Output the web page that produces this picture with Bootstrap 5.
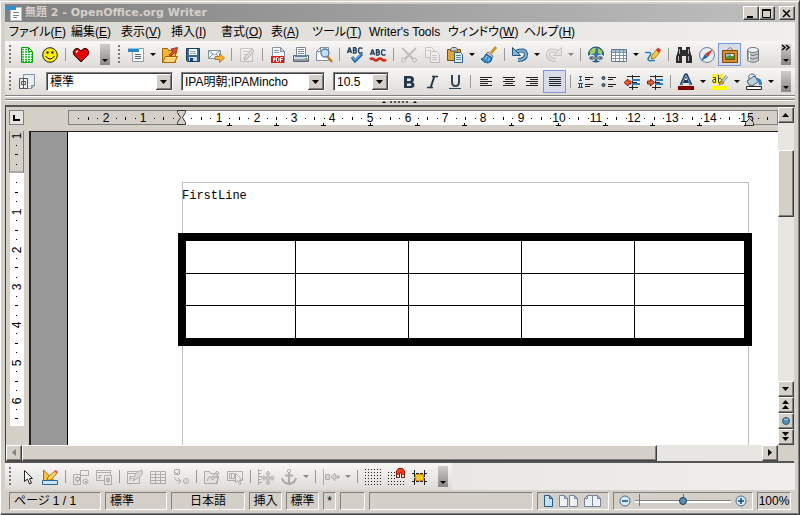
<!DOCTYPE html>
<html lang="ja">
<head>
<meta charset="utf-8">
<meta name="viewport" content="width=device-width, initial-scale=1">
<title>無題 2 - OpenOffice.org Writer</title>
<link href="https://cdn.jsdelivr.net/npm/bootstrap@5.3.0/dist/css/bootstrap.min.css" rel="stylesheet">
<style>
:root{--face:#d4d0c8;--dark:#808080}
body{font:12px/16px "Liberation Sans","Noto Sans CJK JP",sans-serif;color:#000;background:var(--face)}
button{padding:0;border:0;background:none;color:inherit;font:inherit;line-height:1}
svg{display:block;flex:none}
.win{height:100vh;padding:3px 4px 4px;border:1px solid #fff;border-top-color:var(--face);border-right-color:#404040;border-bottom-color:#404040;box-shadow:inset 0 1px #fff,inset -1px -1px var(--dark)}
.titlebar{height:18px;padding-left:1px;background:linear-gradient(90deg,#808080,#c0c0c0);color:var(--face)}
.titlebar h1{font:bold 11px/18px "DejaVu Sans","Noto Sans CJK JP",sans-serif;margin:0 0 0 2px}
.bevel{background:var(--face);border:1px solid;border-color:#fff #404040 #404040 #fff;box-shadow:inset -1px -1px var(--dark);display:flex;align-items:center;justify-content:center;flex:none}
.capbtn{width:16px;height:14px}
.menubar{height:19px;padding-left:4px;background:linear-gradient(90deg,#dbd8d2,#f1efed)}
.menubar a{color:#000;text-decoration:none;white-space:nowrap;flex:none;font-feature-settings:"palt"}
.menubar u{text-underline-offset:1px}
.m1{width:62px}.m2{width:50px}.m3{width:41px}.m4{width:57px}.m5{width:79px}.m6{width:76px}
.tbar{height:27px;background:linear-gradient(#f8f7f6,#dedbd7);flex:none}
.tail{background:linear-gradient(90deg,#e1ded9,#f0eeec)}
.grip{width:10px;height:20px;flex:none;background:repeating-linear-gradient(#777 0 2px,transparent 2px 4px) 4px 0/2px 100% no-repeat}
.ic{width:23px;height:23px;flex:none;display:flex;align-items:center;justify-content:center}
.ic.on{background:#d8dcea;border:1px solid #7c96dc}
.ic:disabled{opacity:.4;filter:grayscale(1)}
.car{width:11px;height:23px;flex:none;display:flex;align-items:center;justify-content:center}
.car::after,.more::after{content:"";border:3px solid transparent;border-top-color:#000;border-bottom:0}
.car:disabled::after{border-top-color:#888}
.vr2{width:1px;height:13px;background:#999;margin:0 3px 0 4px;flex:none}
.more{width:10px;height:21px;flex:none;background:linear-gradient(#d0cdc7,#888);display:flex;flex-direction:column;align-items:center;justify-content:flex-end;padding-bottom:3px}
.combo{height:19px;appearance:none;border:1px solid;border-color:var(--dark) #fff #fff var(--dark);box-shadow:inset 1px 1px #404040;padding:0 18px 0 3px;font:12px/16px "Liberation Sans","Noto Sans CJK JP",sans-serif;font-feature-settings:"palt";color:#000;border-radius:0;background:#fff url("data:image/svg+xml,%3Csvg xmlns='http://www.w3.org/2000/svg' width='16' height='16'%3E%3Cpath fill='%23404040' d='M0 0h16v16H0z'/%3E%3Cpath fill='%23fff' d='M0 0h15v15H0z'/%3E%3Cpath fill='%23808080' d='M1 1h14v14H1z'/%3E%3Cpath fill='%23d4d0c8' d='M1 1h13v13H1z'/%3E%3Cpath d='M4 6h7L7.500 10z'/%3E%3C/svg%3E") right 0 top 1px no-repeat}
.c1{width:127px}.c2{width:144px}.c3{width:56px}
.split{height:12px;flex:none;border-top:1px solid var(--dark);border-bottom:2px solid #555;background:linear-gradient(#fff 0 1px,#d4d0c8 1px 3px,#808080 3px 4px,#fff 4px 5px,#d4d0c8 5px)}
.editor{display:grid;grid-template:24px minmax(0,1fr) 16px / 23px minmax(0,1fr) 16px;border-left:1px solid #404040;border-bottom:2px solid #555;margin-right:1px;min-height:0}
.tabsel{width:15px;height:15px;margin:3px 0 0 3px;background:#e8e6e1;border:1px solid var(--dark);display:flex;align-items:center;justify-content:center}
.hrule{grid-column:2}.vrule{grid-column:1;overflow:hidden}
.desk{background:#999;border:solid #222;border-width:1px 0 0 2px;padding-left:36px;overflow:hidden}
.sheet{height:100%;background:#fff;border-left:1px solid #000;padding:50px 29px 0 114px}
.area{height:100%;border:1px solid #c0c0c0;border-bottom:0;font:12px/16px "Liberation Mono","Noto Sans CJK JP",monospace}
.area p{margin:0 -1px;padding:5px 0 29px}
.grid5{width:calc(100% + 9px);margin-left:-5px;border-collapse:collapse;table-layout:fixed;border:8px solid #000;background:#fff}
.grid5 td{height:32px;border:1px solid #000;padding:0}
.grid5 tr:first-child td{height:36px}.grid5 tr:last-child td{height:37px}
.vs{grid-column:3;grid-row:1/3}.hs{grid-column:1/3}
.trk{background:#e7e6e2}
.sb{width:16px;height:16px}
.status{height:20px;padding:2px 4px 0 4px;gap:4px}
.cell{height:18px;border:1px solid;border-color:var(--dark) #fff #fff var(--dark);display:flex;align-items:center;flex:none;white-space:nowrap;overflow:hidden}
.s1{width:92px;padding-left:4px}.s2{width:62px;padding-left:4px}.s3{width:74px}.s4{width:33px}.s5{width:13px}.s6{width:25px}.s7{width:72px;gap:5px;padding-left:6px}.s8{width:140px;padding:0 5px}.s9{width:34px}
.cell span{font-feature-settings:"palt"}
.zoom{appearance:none;width:98px;height:14px;flex:1;min-width:0;margin:0 4px;background:linear-gradient(#777 0 0) 4px 0/1px 12px no-repeat,linear-gradient(#777 0 0) 50% 0/1px 5px no-repeat,linear-gradient(#808080 0 1px,#fff 1px) 0 6px/100% 3px no-repeat}
.zoom::-webkit-slider-thumb{appearance:none;width:8px;height:8px;border-radius:50%;background:#5a8fb5;border:1px solid #173b57}
</style>
</head>
<body>
<div class="win d-flex flex-column">
<header class="titlebar d-flex align-items-center flex-shrink-0">
<svg width="17" height="17" viewBox="0 0 17 17"><path fill="#fff" stroke="#b6c0ca" d="M4.500 2.500h11v13h-11z"/><path fill="#2f8fd0" d="M0 1h10v4H0z"/><path stroke="#788" d="M7 7.500h6M7 10.500h6M7 12.500h4"/></svg>
<h1>無題 2 - OpenOffice.org Writer</h1>
<div class="d-flex ms-auto">
<button class="bevel capbtn" aria-label="最小化"><svg width="10" height="9"><path d="M1 7h6v2H1z"/></svg></button>
<button class="bevel capbtn" aria-label="最大化"><svg width="10" height="9"><path fill="none" stroke="#000" d="M.5 1v7.500h8V1M0 .5h9M0 1.500h9"/></svg></button>
<button class="bevel capbtn ms-1" aria-label="閉じる"><svg width="10" height="9"><path stroke="#000" stroke-width="1.500" d="M1 1l7 7M8 1L1 8"/></svg></button>
</div>
</header>
<nav class="menubar d-flex align-items-center flex-shrink-0" aria-label="メニュー">
<a class="m1" href="#">ファイル(<u>F</u>)</a><a class="m2" href="#">編集(<u>E</u>)</a><a class="m2" href="#">表示(<u>V</u>)</a><a class="m2" href="#">挿入(<u>I</u>)</a><a class="m2" href="#">書式(<u>O</u>)</a><a class="m3" href="#">表(<u>A</u>)</a><a class="m4" href="#">ツール(<u>T</u>)</a><a class="m5" href="#">Writer's Tools</a><a class="m6" href="#">ウィンドウ(<u>W</u>)</a><a href="#">ヘルプ(<u>H</u>)</a>
</nav>

<div class="tbar d-flex align-items-center">
<span class="grip"></span>
<button class="ic" aria-label="表計算"><svg width="18" height="18"><path fill="#fff" stroke="#0a0" d="M3.500 1.500h7l4 4v11h-11z"/><path stroke="#0c1" stroke-width="1.600" stroke-dasharray="2 1" d="M4 3.500h6M4 6h9M4 8.500h10M4 11h10M4 13.500h10M4 15.500h10"/><path fill="#fff" stroke="#0a0" d="M10.500 1.500v4h4z"/></svg></button>
<button class="ic" aria-label="スマイル"><svg width="18" height="18"><circle cx="9" cy="9" r="7.300" fill="#fff000" stroke="#222"/><path d="M5.500 5.500h2v2h-2zM10.500 5.500h2v2h-2z"/><path fill="none" stroke="#000" d="M4.500 10q4.500 6 9 0"/></svg></button>
<i class="vr2"></i>
<button class="ic" aria-label="ハート"><svg width="18" height="18"><path fill="#e80000" stroke="#200" d="M9 16L2 9Q0 5 3 3q3-2 6 2q3-4 6-2q3 2 1 6z"/><path stroke="#fff" stroke-width="1.500" d="M4 6.500l2-2"/></svg></button>
<button class="more ms-2" aria-label="その他"></button>
<span class="grip ms-1"></span>
<button class="ic" aria-label="新規"><svg width="18" height="18"><path fill="#fff" stroke="#8a9bab" d="M5.500 2.500h11v13h-11z"/><path fill="#2787c8" d="M1 2h11v4H1z"/><path fill="#8cc5ea" d="M1 2h11v1H1z"/><path stroke="#567" d="M8 8.500h6M8 10.500h6M8 12.500h6"/></svg></button><button class="car" aria-label="新規の種類"></button>
<button class="ic" aria-label="開く"><svg width="18" height="18"><path fill="#f6b335" stroke="#a86400" d="M1.500 16.500v-14h5l1 2h7v12z"/><path fill="#ffd675" stroke="#a86400" d="M1.500 16.500l3-6h12l-3 6z"/><path fill="#e0502c" stroke="#8a2410" stroke-width=".8" d="M8 9l4-4-2-2 6.500-1.500L15 8l-1.500-1.500-4 4z"/></svg></button>
<button class="ic" aria-label="保存"><svg width="18" height="18"><path fill="#376b96" stroke="#173f63" d="M2.500 2.500h13v13h-12l-1-1z"/><path fill="#fff" d="M5 3h8v6H5z"/><path fill="#cbd8e2" d="M5 11h8v4H5z"/><path fill="#173f63" d="M6 12h3v3H6z"/><path stroke="#9ab" d="M6 5.500h6M6 7.500h6"/></svg></button>
<button class="ic" aria-label="メールで送信"><svg width="18" height="18"><path fill="#fff" stroke="#7b93a8" d="M1.500 4.500h12v8h-12z"/><path fill="none" stroke="#7b93a8" d="M2 5l5.500 4L13 5M2 12l4-4M13 12L9 8"/><path fill="#f9b233" stroke="#a86400" stroke-width=".8" d="M8 10.500h4.500v-3l5 4.500-5 4.500v-3H8z"/></svg></button>
<i class="vr2"></i>
<button class="ic" disabled aria-label="編集モード"><svg width="18" height="18"><path fill="#eee" stroke="#888" d="M2.500 2.500h12v13h-12z"/><path stroke="#999" d="M5 5.500h7M5 8.500h4M5 11.500h3"/><path fill="#ccc" stroke="#666" d="M6 14l1-3 7-8 2 2-7 8z"/></svg></button>
<i class="vr2"></i>
<button class="ic" aria-label="PDF"><svg width="18" height="18"><path fill="#f4f7fa" stroke="#8193a4" d="M3.500 1.500h8l4 4v11h-12z"/><path fill="#cdd8e1" stroke="#8193a4" d="M11.500 1.500v4h4z"/><path stroke="#89a" d="M5 4.500h5M5 6.500h5"/><path fill="#d81e13" d="M2 10h13v7H2z"/><path stroke="#fff" stroke-width="1" fill="none" d="M4.500 16v-4h1.500v2h-1.500M7.500 11.500h1.500l1 1v2l-1 1h-1.500zM11.500 16v-4.500h2.500M11.500 13.500h2"/></svg></button>
<button class="ic" aria-label="印刷"><svg width="18" height="18"><path fill="#fff" stroke="#7c8791" d="M4.500 9V1.500h9V9"/><path stroke="#789" d="M6 3.500h6M6 5.500h6M6 7.500h6"/><path fill="#d3dae0" stroke="#5b6670" d="M1.500 9.500h15v6h-15z"/><path fill="#5d87a8" d="M3 9h12v2H3z"/><path fill="#8d99a4" d="M2 13h14v2H2z"/><path fill="#6b3" d="M13 12h2v1h-2z"/></svg></button>
<button class="ic" aria-label="印刷プレビュー"><svg width="18" height="18"><path fill="#fff" stroke="#8193a4" d="M1.500 5.500l4-4h8v13h-12z"/><path fill="none" stroke="#8193a4" d="M1.500 5.500h4v-4"/><path stroke="#c07d22" stroke-width="2.500" d="M12 10l5 6"/><circle cx="10" cy="7" r="4" fill="#bfe0f8" stroke="#577a9a" stroke-width="1.300"/></svg></button>
<i class="vr2"></i>
<button class="ic" aria-label="スペルチェック"><svg width="18" height="18"><path fill="none" stroke="#23435f" stroke-width="1.400" d="M1.500 7l1.700-5h.6l1.700 5M2 5.500h3M7.500 1.700V7h2q2-1.500 0-2.700h-2h2q1.500-1.300 0-2.600zM16.500 2.500q-4-2-4 2t4 2"/><path fill="none" stroke="#1d65a8" stroke-width="3" d="M6 11l3 4 7-7"/><path fill="none" stroke="#8cc8f5" d="M6.500 11l2.500 3.300 6-6"/></svg></button>
<button class="ic" aria-label="自動スペルチェック"><svg width="18" height="18"><path fill="none" stroke="#23435f" stroke-width="1.400" d="M1.500 9l1.700-5h.6l1.700 5M2 7.500h3M7.500 3.700V9h2q2-1.500 0-2.700h-2h2q1.500-1.300 0-2.600zM16.500 4.500q-4-2-4 2t4 2"/><path fill="none" stroke="#d92b1c" stroke-width="2.500" d="M1 13.500q2-2 4 0t4 0t4 0t4 0"/></svg></button>
<i class="vr2"></i>
<button class="ic" disabled aria-label="切り取り"><svg width="18" height="18"><path fill="none" stroke="#777" stroke-width="1.800" d="M2 2l11 11M16 2L5 13"/><circle cx="3.500" cy="14" r="2" fill="none" stroke="#777"/><circle cx="14.500" cy="14" r="2" fill="none" stroke="#777"/></svg></button>
<button class="ic" disabled aria-label="コピー"><svg width="18" height="18"><path fill="#f4f4f4" stroke="#888" d="M2.500 1.500h6l2 2v8h-8z"/><path fill="#f4f4f4" stroke="#888" d="M7.500 5.500h6l3 3v8h-9z"/><path stroke="#999" d="M4 4.500h4M9 9.500h5M9 11.500h5M9 13.500h5"/></svg></button>
<button class="ic" aria-label="貼り付け"><svg width="18" height="18"><path fill="#e4a62f" stroke="#7b5200" d="M1.500 3.500h13v11h-13z"/><path fill="#ccd2d6" stroke="#555" d="M4.500 5v-2l2-1.500h3l2 1.500v2z"/><path fill="#eaf3fb" stroke="#2a5f8e" d="M8.500 6.500h6l2 2v8h-8z"/><path stroke="#4b86b5" d="M10 9.500h5M10 11.500h5M10 13.500h5"/></svg></button><button class="car" aria-label="貼り付け形式"></button>
<button class="ic" aria-label="書式の貼り付け"><svg width="18" height="18"><path stroke="#d2942a" stroke-width="3" d="M11 7l5-6"/><path fill="#ccd2d6" stroke="#667" d="M8 6l5 4-1 2-6-4z"/><path fill="#3a8ed3" stroke="#14528b" d="M6 8l6 4q0 4-4 5-4 0-7-4 3 0 5-5z"/><path stroke="#a8d7ff" d="M5 13l2-3M8 15l1.500-3"/></svg></button>
<i class="vr2"></i>
<button class="ic" aria-label="元に戻す"><svg width="18" height="18"><path fill="none" stroke="#24587f" stroke-width="4" d="M4 6q10-4 11 2 0 6-8 6"/><path fill="none" stroke="#80b6da" stroke-width="2" d="M4 6q10-4 11 2 0 6-8 6"/><path fill="#80b6da" stroke="#24587f" d="M1.500 1.500v8h8z"/></svg></button><button class="car" aria-label="元に戻す履歴"></button>
<button class="ic" disabled aria-label="やり直し"><svg width="18" height="18"><path fill="none" stroke="#888" stroke-width="4" d="M14 6Q4 2 3 8q0 6 8 6"/><path fill="none" stroke="#ddd" stroke-width="2" d="M14 6Q4 2 3 8q0 6 8 6"/><path fill="#ddd" stroke="#888" d="M16.500 1.500v8h-8z"/></svg></button><button class="car" disabled aria-label="やり直し履歴"></button>
<i class="vr2"></i>
<button class="ic" aria-label="ハイパーリンク"><svg width="18" height="18"><circle cx="9" cy="8.500" r="7.500" fill="#2e74b3" stroke="#194872"/><path fill="#a5cf5b" d="M3 5q3-4 6-3l-1 5-5 2zM11 2l4 3v4l-4-2z"/><rect x="1.500" y="9.500" width="6" height="5" rx="2.500" fill="#5a6d7d" stroke="#dfe8ee" stroke-width="1.500"/><rect x="10.500" y="9.500" width="6" height="5" rx="2.500" fill="#5a6d7d" stroke="#dfe8ee" stroke-width="1.500"/><path stroke="#234" stroke-width="2.500" d="M5 12h8"/><path stroke="#dfe8ee" d="M5 12h8"/></svg></button>
<button class="ic" aria-label="表"><svg width="18" height="18"><path fill="#fff" stroke="#607990" d="M1.500 3.500h15v12h-15z"/><path fill="#a9c1d6" d="M2 4h14v2H2z"/><path stroke="#7d94a9" d="M2 6.500h14M2 9.500h14M2 12.500h14M5.500 4v11M9.500 4v11M13.500 4v11"/></svg></button><button class="car" aria-label="表の大きさ"></button>
<button class="ic" aria-label="図形描画"><svg width="18" height="18"><path fill="none" stroke="#2b80c4" stroke-width="1.500" d="M1 6.500h4q3 0 1 3l-2 3q0 3 4 2h3"/><path fill="#ffc83d" stroke="#9a6b00" stroke-width=".8" d="M7 13l1-4 5-6 3 3-5 6z"/><path fill="#d33" d="M12 4l2-2.500 3 2.500L15 7z"/></svg></button>
<i class="vr2"></i>
<button class="ic" aria-label="検索と置換"><svg width="18" height="18"><path fill="#2d2d2d" d="M3 1h4v3h4V1h4v4l2 6v6h-6v-7H7v7H1v-6l2-6z"/><path stroke="#aaa" d="M4.500 3v5M3.500 10v5M13.500 3v5M13.500 10v5"/></svg></button>
<button class="ic" aria-label="ナビゲーター"><svg width="18" height="18"><circle cx="9" cy="9" r="7.500" fill="#e4edf4" stroke="#6d8294"/><path fill="#1e66b2" d="M3 15l4-7 3 3z"/><path fill="#e0331f" d="M15 3L7 8l3 3z"/></svg></button>
<button class="ic on" aria-label="ギャラリー"><svg width="18" height="18"><path fill="none" stroke="#9b7028" d="M5 5l4-3.500L13 5"/><path fill="#d69131" stroke="#7d4800" d="M1.500 4.500h15v12h-15z"/><path fill="#8fc8ee" stroke="#7d4800" d="M4.500 7.500h9v6h-9z"/><path fill="#4d9434" d="M5 13v-2q4-3 8-1v3z"/><path fill="#fff36b" d="M10 8h2v2h-2z"/></svg></button>
<button class="ic" aria-label="データソース"><svg width="18" height="18"><path fill="#c9ced2" stroke="#6d757c" d="M3.500 4v10.500q5.500 3.500 11 0V4"/><ellipse cx="9" cy="4" rx="5.500" ry="2.500" fill="#f2f4f5" stroke="#6d757c"/><path fill="none" stroke="#6d757c" d="M3.500 8q5.500 3 11 0M3.500 11.500q5.500 3 11 0"/><path stroke="#fff" d="M5.500 7v8"/></svg></button>
<button class="more ms-auto me-1" aria-label="その他"><svg class="mb-auto" width="10" height="8"><path fill="none" stroke="#000" stroke-width="1.300" d="M1 1l3 2.500L1 6M5 1l3 2.500L5 6"/></svg></button>
</div>

<div class="tbar d-flex align-items-center">
<span class="grip"></span>
<button class="ic" aria-label="スタイルと書式設定"><svg width="18" height="18"><path fill="#e6eef4" stroke="#8293a2" d="M5.500 1.500h11v11l-3 3h-8z"/><path fill="#b9cddc" stroke="#8293a2" d="M16.500 12.500h-3v3z"/><path fill="#eee" stroke="#555" d="M1.500 5.500h8v10h-8z"/><path fill="#fff" stroke="#555" d="M3.500 8.500h4v3h-4zM5.500 6v9"/></svg></button>
<select class="combo c1 ms-2 flex-shrink-0" aria-label="段落スタイル"><option>標準</option></select>
<select class="combo c2 ms-2 flex-shrink-0" aria-label="フォント名"><option>IPA明朝;IPAMincho</option></select>
<select class="combo c3 ms-2 me-2 flex-shrink-0" aria-label="フォントサイズ"><option>10.5</option></select>
<button class="ic" aria-label="太字"><svg width="18" height="18"><path fill="#26384a" fill-rule="evenodd" d="M4 3h6q4 0 4 3.500 0 2-1.500 2.500Q14.500 10 14.500 12q0 3-4 3H4zM7 5.500v2.500h2.500q1.500 0 1.500-1.200T9.500 5.500zM7 10.500v2.500h2.500q2 0 2-1.300t-2-1.200z"/></svg></button>
<button class="ic" aria-label="斜体"><svg width="18" height="18"><path stroke="#26384a" stroke-width="2" d="M11.500 3l-4 12"/><path stroke="#26384a" stroke-width="1.300" d="M9 3.500h6M4 14.500h6"/></svg></button>
<button class="ic" aria-label="下線"><svg width="18" height="18"><path fill="none" stroke="#34465a" stroke-width="2" d="M6 2v7q0 4 3.500 4T13 9V2"/><path stroke="#34465a" d="M3 15.500h12"/></svg></button>
<i class="vr2"></i>
<button class="ic" aria-label="左揃え"><svg width="18" height="18"><path stroke="#222" d="M3 4.500h12M3 6.500h8M3 8.500h12M3 10.500h8M3 12.500h12"/></svg></button>
<button class="ic" aria-label="中央揃え"><svg width="18" height="18"><path stroke="#222" d="M3 4.500h12M5 6.500h8M3 8.500h12M5 10.500h8M3 12.500h12"/></svg></button>
<button class="ic" aria-label="右揃え"><svg width="18" height="18"><path stroke="#222" d="M3 4.500h12M7 6.500h8M3 8.500h12M7 10.500h8M3 12.500h12"/></svg></button>
<button class="ic on" aria-label="両端揃え"><svg width="18" height="18"><path stroke="#222" d="M3 4.500h12M3 6.500h12M3 8.500h12M3 10.500h12M3 12.500h12"/></svg></button>
<i class="vr2"></i>
<button class="ic" aria-label="番号付け"><svg width="18" height="18"><path stroke="#2c536f" d="M2 3.500h3M2 7.500h3M3.500 3v5M1 10.500h5M1 14.500h5M2.500 10v5M4.500 10v5"/><path stroke="#222" d="M8 4.500h8M8 6.500h5M8 11.500h8M8 13.500h5"/></svg></button>
<button class="ic" aria-label="箇条書き"><svg width="18" height="18"><circle cx="3.500" cy="5" r="1.500" fill="#4b86b5" stroke="#234"/><circle cx="3.500" cy="12" r="1.500" fill="#4b86b5" stroke="#234"/><path stroke="#222" d="M8 4.500h8M8 6.500h5M8 11.500h8M8 13.500h5"/></svg></button>
<button class="ic" aria-label="インデントを減らす"><svg width="18" height="18"><path stroke="#222" d="M4 3.500h13M6 14.500h9M9.500 2v15"/><path stroke="#2580bd" stroke-width="2" d="M9 7h8M9 11h8"/><path stroke="#222" d="M9 9.500h5"/><path fill="#ee6430" stroke="#8c2108" d="M1 9.500l4-3.500V8h3v3H5v2z"/></svg></button>
<button class="ic" aria-label="インデントを増やす"><svg width="18" height="18"><path stroke="#222" d="M4 3.500h13M6 14.500h9M9.500 2v15"/><path stroke="#2580bd" stroke-width="2" d="M9 7h8M9 11h8"/><path stroke="#222" d="M9 9.500h5"/><path fill="#ee6430" stroke="#8c2108" d="M8.500 9.500l-4-3.500V8h-3v3h3v2z"/></svg></button>
<i class="vr2"></i>
<button class="ic" aria-label="フォントの色"><svg width="18" height="18"><path fill="none" stroke="#1c3d5c" stroke-width="2.800" d="M4 12l4.500-10h1L14 12M6 8.500h6"/><path fill="none" stroke="#7eaed1" d="M4.500 12L9 2l4.500 10"/><path fill="#800000" d="M1 13h16v4H1z"/></svg></button><button class="car" aria-label="フォントの色の選択"></button>
<button class="ic" aria-label="蛍光ペン"><svg width="18" height="18"><path fill="#ffec3c" d="M1 1h11v10H1z"/><path fill="none" stroke="#345" d="M2 4.500h2.500v5M4.500 6.500H2.500l-1 1.500 1 1.500h2M7.500 2v7.500h2l1-1.500v-1.500l-1-1h-2"/><path stroke="#8a9aaa" stroke-width="3" d="M11 9l5-6"/><path stroke="#eef2f6" d="M11 9l5-6"/><path fill="#e7b52f" stroke="#875b00" stroke-width=".7" d="M8 12l2-4 3 2z"/><path fill="#ff0" d="M1 13h16v4H1z"/></svg></button><button class="car" aria-label="蛍光ペンの色"></button>
<button class="ic" aria-label="背景色"><svg width="18" height="18"><path fill="none" stroke="#567" d="M4 6Q3 1 7 1t4 5"/><path fill="#bdd0de" stroke="#44596b" d="M2 8l7-5 5 5-6 4.500-4-.5z"/><path fill="#2f80bd" d="M12 5q5 0 5 7h-3q0-4-3-5z"/><path fill="#fff" stroke="#222" d="M1.500 13.500h15v3h-15z"/></svg></button><button class="car" aria-label="背景色の選択"></button>
<button class="more ms-auto me-1" aria-label="その他"></button>
</div>

<div class="split d-flex justify-content-center align-items-end"><svg width="36" height="5"><path d="M0 3l2-2 2 2zM31 3l2-2 2 2z"/><path stroke="#555" stroke-dasharray="2 2" stroke-width="2" d="M8 2h18"/></svg></div>

<main class="editor flex-grow-1">
<div><button class="tabsel" aria-label="タブの種類"><svg width="7" height="6"><path d="M0 0h2v4h5v2H0z"/></svg></button></div>
<div class="hrule"><svg id="hr" width="100%" height="24"></svg></div>
<div class="vs d-flex flex-column">
<button class="bevel sb" aria-label="上へ"><svg width="8" height="4"><path d="M0 4l3.500-4L7 4z"/></svg></button>
<div class="trk flex-grow-1 d-flex flex-column"><i style="flex:27"></i><span class="bevel" style="flex:66"></span><i style="flex:165"></i></div>
<button class="bevel sb" aria-label="下へ"><svg width="8" height="4"><path d="M0 0h7L3.500 4z"/></svg></button>
<button class="bevel sb" aria-label="前ページ"><svg width="8" height="10"><path d="M0 4l3.500-4L7 4zM0 9l3.500-4L7 9z"/></svg></button>
<button class="bevel sb" aria-label="ナビゲーション"><svg width="10" height="10"><circle cx="5" cy="5" r="3.500" fill="#5a8fb5" stroke="#2f5875"/><path fill="#a8cce4" d="M3 3h4v1H3z"/></svg></button>
<button class="bevel sb" aria-label="次ページ"><svg width="8" height="10"><path d="M0 0h7L3.500 4zM0 5h7L3.500 9z"/></svg></button>
</div>
<div class="vrule"><svg id="vr" width="23" height="100%"></svg></div>
<div class="desk"><div class="sheet"><div class="area">
<p>FirstLine</p>
<table class="grid5"><tbody>
<tr><td></td><td></td><td></td><td></td><td></td></tr>
<tr><td></td><td></td><td></td><td></td><td></td></tr>
<tr><td></td><td></td><td></td><td></td><td></td></tr>
</tbody></table>
</div></div></div>
<div class="hs d-flex">
<button class="bevel sb" aria-label="左へ"><svg width="4" height="8"><path fill="#808080" d="M4 0v7L0 3.500z"/></svg></button>
<div class="trk flex-grow-1 d-flex"><span class="bevel" style="flex:636"></span><i style="flex:106"></i></div>
<button class="bevel sb" aria-label="右へ"><svg width="4" height="8"><path d="M0 0v7l4-3.500z"/></svg></button>
</div>
</main>

<div class="d-flex flex-shrink-0 tail">
<div class="tbar d-flex align-items-center">
<span class="grip"></span>
<button class="ic" aria-label="選択"><svg width="18" height="18"><path fill="#fff" stroke="#222" d="M6.500 2.500v11l3-2.500 2 5 2-1-2-4.500h3z"/></svg></button>
<button class="ic" aria-label="デザインモード"><svg width="18" height="18"><path fill="#ffc23d" stroke="#b06a00" d="M2.500 2v11h11z"/><path fill="#ffd966" stroke="#8a5a00" stroke-width=".8" d="M6 12l1-3 7-6 2 2-6 7z"/><path fill="#e2525e" d="M13 3l2-1 2 2-1.500 2z"/><path fill="#cfe3f3" stroke="#28669c" d="M1.500 12.500h15v4h-15z"/></svg></button>
<i class="vr2"></i>
<button class="ic" disabled aria-label="コントロール"><svg width="18" height="18"><path fill="none" stroke="#555" d="M8.500 2.500h8v5h-8zM1.500 6.500h7v10h-7zM5.500 8v7"/><path fill="#ccc" stroke="#555" d="M3.500 9.500h4v3h-4z"/><circle cx="13.500" cy="13.500" r="2.500" fill="none" stroke="#555"/><path d="M13 13h1.500v1.500H13z"/></svg></button>
<button class="ic" disabled aria-label="フォーム"><svg width="18" height="18"><path fill="none" stroke="#555" d="M1.500 2.500h14v10h-14zM1 4.500h14M4 7v4M4 7.500h3M4 9.500h2"/><path fill="#eee" stroke="#555" d="M9.500 7.500h7v9h-7zM13 9v6M11.500 10.500h3v3h-3z"/></svg></button>
<i class="vr2"></i>
<button class="ic" disabled aria-label="フォームデザイン"><svg width="18" height="18"><path fill="none" stroke="#555" d="M1.500 3.500h12v12h-12zM1 5.500h10M4 8v5M4 8.500h3M4 10.500h2"/><path fill="#bbb" stroke="#555" d="M7 13q1-9 9-11 2 6-6 9z"/></svg></button>
<button class="ic" disabled aria-label="表コントロール"><svg width="18" height="18"><path fill="#eee" stroke="#555" d="M1.500 3.500h15v12h-15zM1 6.500h15M1 9.500h15M1 12.500h15M6.500 4v11M11.500 4v11"/></svg></button>
<button class="ic" disabled aria-label="タブ順序"><svg width="18" height="18"><path fill="none" stroke="#555" d="M2.500 1.500h5v5h-5zM3 4l2 2 3-4M2 9q1 4 6 4M6 10l3 3-3 3"/><circle cx="14" cy="13" r="2.500" fill="none" stroke="#555"/><path d="M13.500 12.500h1v1h-1z"/></svg></button>
<i class="vr2"></i>
<button class="ic" disabled aria-label="ウィザード"><svg width="18" height="18"><path fill="#ddd" stroke="#555" d="M1.500 15.500v-12h5l1 2h7v10zM4 13l2-4h10l-3 6M8 11l6-8 2 2-6 7z"/></svg></button>
<button class="ic" disabled aria-label="自動フォーカス"><svg width="18" height="18"><path fill="none" stroke="#555" d="M1.500 3.500h15v9h-15zM3.500 5.500h5v5h-5zM5.500 6v4"/><path fill="#fff" stroke="#555" d="M9.500 5.500v9l2-2 2 4 1.500-1-2-3.500h3z"/></svg></button>
<i class="vr2"></i>
<button class="ic" disabled aria-label="位置とサイズ"><svg width="18" height="18"><path fill="none" stroke="#555" d="M1.500 1v16M2 2.500h3M2 5.500h2M2 8.500h3M2 11.500h2M2 14.500h3"/><path fill="#999" stroke="#555" stroke-width=".7" d="M11 3l2 2.500h-1V9h3V7.500l2.500 2.500-2.500 2.500V11h-3v3.500h1L11 17l-2-2.500h1V11H7v1.500L4.500 10 7 7.500V9h3V5.500H9z"/></svg></button>
<button class="ic" disabled aria-label="アンカー"><svg width="18" height="18"><circle cx="9" cy="3" r="1.700" fill="none" stroke="#555"/><path fill="none" stroke="#555" stroke-width="2" d="M9 5v11M5 7.500h8M2 10q1 5 7 6 6-1 7-6"/></svg></button><button class="car" disabled aria-label="アンカーの種類"></button>
<i class="vr2"></i>
<button class="ic" disabled aria-label="配置"><svg width="18" height="18"><path stroke="#555" d="M1.500 1v16"/><path fill="#bbb" stroke="#555" d="M3.500 6.500h4v5h-4zM9 9l4-3.500V8h4v2h-4v2.500z"/></svg></button><button class="car" disabled aria-label="配置の選択"></button>
<i class="vr2"></i>
<button class="ic" aria-label="グリッド表示"><svg width="18" height="18"><path stroke="#222" stroke-dasharray="1 2" d="M1 1.500h17M1 4.500h17M1 7.500h17M1 10.500h17M1 13.500h17M1 16.500h17"/></svg></button>
<button class="ic" aria-label="グリッドに合わせる"><svg width="18" height="18"><path stroke="#222" stroke-dasharray="1 2" d="M1 4.500h8M1 7.500h8M1 10.500h8M1 13.500h17M1 16.500h17"/><path fill="#ff3b18" stroke="#8a1000" d="M9.500 9.500V3l2-2.500h4l2 2.500v6.500h-3V5h-2v4.500z"/><path fill="#fff" d="M10 7h2v2h-2zM15 7h2v2h-2z"/></svg></button>
<button class="ic" aria-label="ガイド"><svg width="18" height="18"><path stroke="#222" stroke-dasharray="3 1" d="M2 5.500h15M2 13.500h15M4.500 2v15M14.500 2v15"/><path fill="#ffc61c" stroke="#e08a00" d="M5.500 6.500h8v6h-8z"/></svg></button>
<button class="more ms-2 me-1" aria-label="その他"></button>
</div>
</div>

<footer class="status d-flex flex-shrink-0">
<div class="cell s1"><span>ページ 1 / 1</span></div>
<div class="cell s2">標準</div>
<div class="cell s3 justify-content-center">日本語</div>
<div class="cell s4 justify-content-center">挿入</div>
<div class="cell s4 justify-content-center">標準</div>
<div class="cell s5 justify-content-center">*</div>
<div class="cell s6"></div>
<div class="cell flex-fill"></div>
<div class="cell s7">
<button aria-label="単一ページ"><svg width="10" height="12"><path fill="#c9e0f6" stroke="#1c5a9c" d="M.5 .5h5l3 3v8h-8zM5.500 .5v3h3"/></svg></button>
<button aria-label="複数ページ"><svg width="20" height="12"><path fill="#eef2f7" stroke="#71869e" d="M.5 .5h5l3 3v8h-8zM5.500 .5v3h3M10.500 .5h5l3 3v8h-8zM15.500 .5v3h3"/></svg></button>
<button aria-label="見開き"><svg width="18" height="12"><path fill="#eef2f7" stroke="#71869e" d="M3.500 .5h5v11h-8v-8zM3.500 .5v3h-3M8.500 .5h5l3 3v8h-8zM13.500 .5v3h3"/></svg></button>
</div>
<div class="cell s8">
<button aria-label="縮小"><svg width="12" height="12"><circle cx="6" cy="6" r="5" fill="#d6ebf9" stroke="#4c6e8b"/><path stroke="#0e4a7c" stroke-width="1.500" d="M3 6h6"/></svg></button>
<input class="zoom" type="range" min="0" max="100" value="50" aria-label="ズーム">
<button aria-label="拡大"><svg width="12" height="12"><circle cx="6" cy="6" r="5" fill="#d6ebf9" stroke="#4c6e8b"/><path stroke="#0e4a7c" stroke-width="1.500" d="M3 6h6M6 3v6"/></svg></button>
</div>
<div class="cell s9 justify-content-center">100%</div>
</footer>
</div>
<script src="https://cdn.jsdelivr.net/npm/bootstrap@5.3.0/dist/js/bootstrap.bundle.min.js"></script>
<script>
// Rulers: one centimetre is 37.75px, with a label each centimetre and marks at each quarter.
const CM = 37.75;
function marks(from, to, draw) {
  for (let q = Math.ceil(from / CM * 4); q * CM / 4 < to; q++) draw(q, Math.round(q * CM / 4));
}
function rulers() {
  const h = document.getElementById('hr'), w = h.clientWidth, zero = 153, end = w - 29;
  let s = `<rect x="39.500" y="3.500" width="${w - 40}" height="14" fill="#d4d0c8" stroke="#808080"/><rect x="${zero}" y="4" width="${end - zero}" height="14" fill="#fff"/>`;
  marks(-110, w - zero - 2, (q, d) => {
    const x = zero + d;
    if (q === 0) return;
    if (q % 4 === 0) s += `<text x="${x - 1}" y="15" font-size="12" text-anchor="middle">${Math.abs(q / 4)}</text>`;
    else s += `<rect x="${x}" y="${q % 2 ? 11 : 10}" width="1" height="${q % 2 ? 1 : 3}"/>`;
  });
  for (let x = zero + 47; x < end; x += 47) s += `<path stroke="#000" d="M${x - 2} 18.500h5M${x + .5} 16v2"/>`;
  s += `<path fill="#d4d0c8" stroke="#333" d="M${zero - 4.5} 3.500h8v2l-3 5 3 5v2h-8v-2l3-5-3-5z"/><path fill="#d4d0c8" stroke="#333" d="M${end - 3.5} 18.500v-3l4-4 4 4v3z"/>`;
  h.innerHTML = s;
  const v = document.getElementById('vr'), t = v.clientHeight, z = 42;
  s = `<rect x="3.500" y="-1" width="14" height="${z}" fill="#d4d0c8" stroke="#808080"/><rect x="4" y="${z}" width="14" height="${t - z - 19}" fill="#fff"/>`;
  marks(-40, t - z - 20, (q, d) => {
    const y = z + d;
    if (q === 0) return;
    if (q % 4 === 0) s += `<text x="15" y="${y + 1}" font-size="12" text-anchor="middle" transform="rotate(-90 15 ${y + 1})">${Math.abs(q / 4)}</text>`;
    else s += `<rect y="${y}" x="${q % 2 ? 10 : 9}" height="1" width="${q % 2 ? 1 : 3}"/>`;
  });
  v.innerHTML = s;
}
rulers();
addEventListener('resize', rulers);
</script>
</body>
</html>
